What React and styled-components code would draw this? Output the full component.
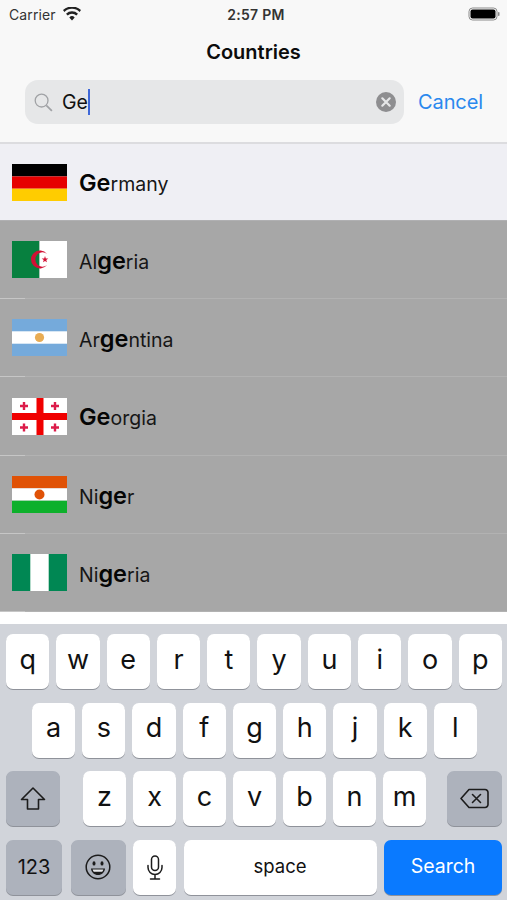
import React from "react";
import styled, { createGlobalStyle } from "styled-components";

const Global = createGlobalStyle`
  html, body { margin: 0; padding: 0; background: #fff; }
  * { box-sizing: border-box; }
  body { font-family: Inter, "Liberation Sans", sans-serif; -webkit-font-smoothing: antialiased; }
`;
const Screen = styled.div`width: 507px; height: 900px; display: flex; flex-direction: column; overflow: hidden; color: #0a0a0a;`;
const Header = styled.header`height: 144px; background: #f8f8f8; border-bottom: 2px solid #dcdcdf; display: flex; flex-direction: column;`;
const StatusBar = styled.div`height: 28px; padding: 0 7px 0 9px; display: grid; grid-template-columns: 1fr auto 1fr; align-items: center; font-size: 14px; color: #333;`;
const Carrier = styled.div`display: flex; align-items: center; gap: 7px; letter-spacing: 0.1px;`;
const Clock = styled.div`font-weight: 600; font-size: 14px; letter-spacing: 0.3px; margin-left: 3px;`;
const BatteryWrap = styled.div`justify-self: end; display: flex;`;
const Title = styled.h1`margin: 0; height: 48px; display: flex; align-items: center; justify-content: center; font-size: 20px; font-weight: 600; color: #0c0c0c;`;
const SearchRow = styled.div`display: flex; align-items: center; padding: 4px 25px 0; gap: 14px;`;
const Field = styled.div`flex: none; width: 379px; height: 44px; border-radius: 13px; background: #e6e7e8; display: flex; align-items: center; padding: 0 8px 0 9px;`;
const Query = styled.span`margin-left: 9px; font-size: 19.5px; color: #111; line-height: 26px; flex: 1; display: flex; align-items: center;`;
const Caret = styled.span`width: 2px; height: 26px; background: #3f68d8;`;
const Cancel = styled.span`font-size: 20px; color: #2a88ee; letter-spacing: -0.1px;`;
const List = styled.div`flex: 1; display: flex; flex-direction: column;`;
const Row = styled.div`
  height: ${p => p.$h}px; display: flex; align-items: center; gap: 12px; padding-left: 12px; position: relative;
  background: ${p => (p.$active ? "#efeff4" : "#a7a7a7")};
  border-bottom: 1px solid ${p => (p.$active ? "#b0b0b2" : "#b2b2b2")};
  &::after { content: ""; position: absolute; left: 0; bottom: -1px; width: 25px; height: 1px; background: ${p => (p.$active ? "#b0b0b2" : "#c6c6c6")}; }
`;
const Flag = styled.svg`width: 55px; height: 37px; display: block; flex: none;`;
const Name = styled.span`font-size: 19.5px; line-height: 1; position: relative; top: 1px; color: #161616;`;
const Hit = styled.b`font-weight: 600; font-size: 23.5px; color: #050505;`;
const Strip = styled.div`height: 12px; background: #fff;`;
const Keyboard = styled.div`height: 276px; background: #d1d4da; padding-top: 10px; display: flex; flex-direction: column; gap: 13.5px;`;
const KeyRow = styled.div`display: flex; height: 55px; gap: ${p => p.$gap ?? 7}px; padding: ${p => p.$pad ?? "0 5px 0 6px"};`;
const Key = styled.div`
  flex: ${p => (p.$w ? `0 0 ${p.$w}px` : "1 1 0")};
  margin-right: ${p => p.$after ?? 0}px;
  margin-left: ${p => p.$before ?? 0}px;
  border-radius: 7px;
  background: ${p => (p.$blue ? "#0a7aff" : p.$dark ? "#adb2bc" : "#fff")};
  color: ${p => (p.$blue ? "#fff" : "#111")};
  box-shadow: 0 1px 0 #8f929a;
  display: flex; align-items: center; justify-content: center;
  font-size: ${p => p.$fs ?? 27}px;
  font-weight: 400;
  padding-bottom: ${p => p.$pb ?? 5}px;
`;

const Wifi = () => (
  <svg width="18" height="14" viewBox="0 0 18 14"><path d="M9 13.5 6.3 10.4a3.9 3.9 0 0 1 5.4 0zM4.7 8.6 3 6.7a8.6 8.6 0 0 1 12 0l-1.7 1.9a6.2 6.2 0 0 0-8.6 0zM1.4 4.9 0 3.1a13 13 0 0 1 18 0l-1.4 1.8a10.7 10.7 0 0 0-15.2 0z" fill="#222"/></svg>
);
const Battery = () => (
  <svg width="32" height="14" viewBox="0 0 32 14"><rect x="1" y="1" width="28" height="12" rx="3.5" fill="none" stroke="#8a8a8a" strokeWidth="1"/><rect x="2.5" y="2.5" width="25" height="9" rx="2" fill="#000"/><rect x="30" y="5" width="1.5" height="4" rx=".7" fill="#8a8a8a"/></svg>
);
const Magnifier = () => (
  <svg width="19" height="19" viewBox="0 0 19 19" fill="none" stroke="#a0a2a5"><circle cx="7.6" cy="7.6" r="6.4" strokeWidth="1.3"/><path d="m12.3 12.3 5.6 5.6" strokeWidth="1.7"/></svg>
);
const Clear = () => (
  <svg width="20" height="20" viewBox="0 0 20 20"><circle cx="10" cy="10" r="10" fill="#8e8e90"/><path d="m6.3 6.3 7.4 7.4m0-7.4-7.4 7.4" stroke="#e6e7e8" strokeWidth="2.2" strokeLinecap="round"/></svg>
);

const Germany = () => (<Flag viewBox="0 0 55 37"><rect width="55" height="12.4" fill="#000"/><rect y="12.4" width="55" height="12.3" fill="#e60000"/><rect y="24.7" width="55" height="12.3" fill="#ffcc00"/></Flag>);
const Algeria = () => (<Flag viewBox="0 0 55 37"><rect width="27.5" height="37" fill="#07803f"/><rect x="27.5" width="27.5" height="37" fill="#fff"/><path d="M35.08 12.94A9 9 0 1 0 35.08 24.06 7.2 7.2 0 1 1 35.08 12.94Z" fill="#d21034"/><polygon points="33,15 33.8,17.4 36.3,17.4 34.3,18.9 35,21.3 33,19.9 31,21.3 31.7,18.9 29.7,17.4 32.2,17.4" fill="#d21034"/></Flag>);
const Argentina = () => (<Flag viewBox="0 0 55 37"><rect width="55" height="37" fill="#75aadb"/><rect y="12.3" width="55" height="12.4" fill="#fff"/><circle cx="27.5" cy="18.5" r="4.6" fill="#e8ac54"/></Flag>);
const GCross = ({ x, y }) => (<path d={`M${x - 1.2} ${y - 4}h2.4v2.8h2.8v2.4h-2.8v2.8h-2.4v-2.8h-2.8v-2.4h2.8z`} fill="#dc1c4a"/>);
const Georgia = () => (<Flag viewBox="0 0 55 37"><rect width="55" height="37" fill="#fff"/><rect x="24.5" width="7" height="37" fill="#f00000"/><rect y="15" width="55" height="7" fill="#f00000"/><GCross x={12} y={8}/><GCross x={43} y={8}/><GCross x={12} y={29.5}/><GCross x={43} y={29.5}/></Flag>);
const Niger = () => (<Flag viewBox="0 0 55 37"><rect width="55" height="12.3" fill="#e05206"/><rect y="12.3" width="55" height="12.4" fill="#fff"/><rect y="24.7" width="55" height="12.3" fill="#0db02b"/><circle cx="27.5" cy="18.5" r="5" fill="#e05206"/></Flag>);
const Nigeria = () => (<Flag viewBox="0 0 55 37"><rect width="55" height="37" fill="#008753"/><rect x="18.3" width="18.4" height="37" fill="#fff"/></Flag>);

const Shift = () => (<svg width="26" height="25" viewBox="0 0 26 25" fill="none" stroke="#1c1c1c" strokeWidth="1.6" strokeLinejoin="round"><path d="M13 2 1.5 13.5H7.5V23H18.5V13.5H24.5Z"/></svg>);
const Backspace = () => (<svg width="29" height="21" viewBox="0 0 29 21" fill="none" stroke="#1c1c1c" strokeWidth="1.6" strokeLinejoin="round"><path d="M9 1.5H25a3 3 0 0 1 3 3v12a3 3 0 0 1-3 3H9L1 10.5Z"/><path d="m12.5 6.5 8 8m0-8-8 8" strokeLinecap="round"/></svg>);
const Smile = () => (<svg width="26" height="26" viewBox="0 0 26 26"><circle cx="13" cy="13" r="11.8" fill="none" stroke="#1c1c1c" strokeWidth="1.5"/><ellipse cx="9" cy="9.4" rx="1.5" ry="2.2" fill="#1c1c1c"/><ellipse cx="17" cy="9.4" rx="1.5" ry="2.2" fill="#1c1c1c"/><path d="M6 14.5h14c-.4 4-3.3 6.5-7 6.5s-6.600-2.500-7-6.500z" fill="#1c1c1c"/><path d="M7.600 15.600h10.800c-.3 1-.7 1.700-1.200 2.200H8.800c-.5-.5-.9-1.200-1.200-2.200z" fill="#e8e9ec"/></svg>);
const Mic = () => (<svg width="16" height="25" viewBox="0 0 16 25" fill="none" stroke="#1c1c1c" strokeWidth="1.5" strokeLinecap="round"><rect x="4.500" y="1" width="7" height="14.500" rx="3.500"/><path d="M1 10.500v2a7 7 0 0 0 14 0v-2M8 19.500V24M3.500 24h9"/></svg>);

const countries = [
  { F: Germany, parts: [["Ge", 1], ["rmany", 0]], h: 77, active: true },
  { F: Algeria, parts: [["Al", 0], ["ge", 1], ["ria", 0]], h: 78 },
  { F: Argentina, parts: [["Ar", 0], ["ge", 1], ["ntina", 0]], h: 78 },
  { F: Georgia, parts: [["Ge", 1], ["orgia", 0]], h: 79 },
  { F: Niger, parts: [["Ni", 0], ["ge", 1], ["r", 0]], h: 78 },
  { F: Nigeria, parts: [["Ni", 0], ["ge", 1], ["ria", 0]], h: 78 },
];

export default function App() {
  return (
    <Screen>
      <Global />
      <Header>
        <StatusBar>
          <Carrier>Carrier <Wifi /></Carrier>
          <Clock>2:57 PM</Clock>
          <BatteryWrap><Battery /></BatteryWrap>
        </StatusBar>
        <Title>Countries</Title>
        <SearchRow>
          <Field>
            <Magnifier />
            <Query>Ge<Caret /></Query>
            <Clear />
          </Field>
          <Cancel>Cancel</Cancel>
        </SearchRow>
      </Header>
      <List>
        {countries.map(({ F, parts, h, active }, i) => (
          <Row key={i} $h={h} $active={active}>
            <F />
            <Name>{parts.map(([t, hit], j) => (hit ? <Hit key={j}>{t}</Hit> : <span key={j}>{t}</span>))}</Name>
          </Row>
        ))}
      </List>
      <Strip />
      <Keyboard>
        <KeyRow>{"qwertyuiop".split("").map(k => <Key key={k}>{k}</Key>)}</KeyRow>
        <KeyRow $pad="0 30px 0 32px">{"asdfghjkl".split("").map(k => <Key key={k}>{k}</Key>)}</KeyRow>
        <KeyRow>
          <Key $w={54} $dark $after={16} $pb={0}><Shift /></Key>
          {"zxcvbnm".split("").map(k => <Key key={k} $w={43}>{k}</Key>)}
          <Key $w={55} $dark $pb={0} $before={14}><Backspace /></Key>
        </KeyRow>
        <KeyRow $gap={7.5}>
          <Key $w={56} $dark $fs={20} $pb={0} $after={1}>123</Key>
          <Key $w={55} $dark $pb={0}><Smile /></Key>
          <Key $w={43} $pb={0}><Mic /></Key>
          <Key $w={193} $fs={18.500} $pb={3}>space</Key>
          <Key $w={118} $blue $fs={19.500} $pb={3}>Search</Key>
        </KeyRow>
      </Keyboard>
    </Screen>
  );
}
